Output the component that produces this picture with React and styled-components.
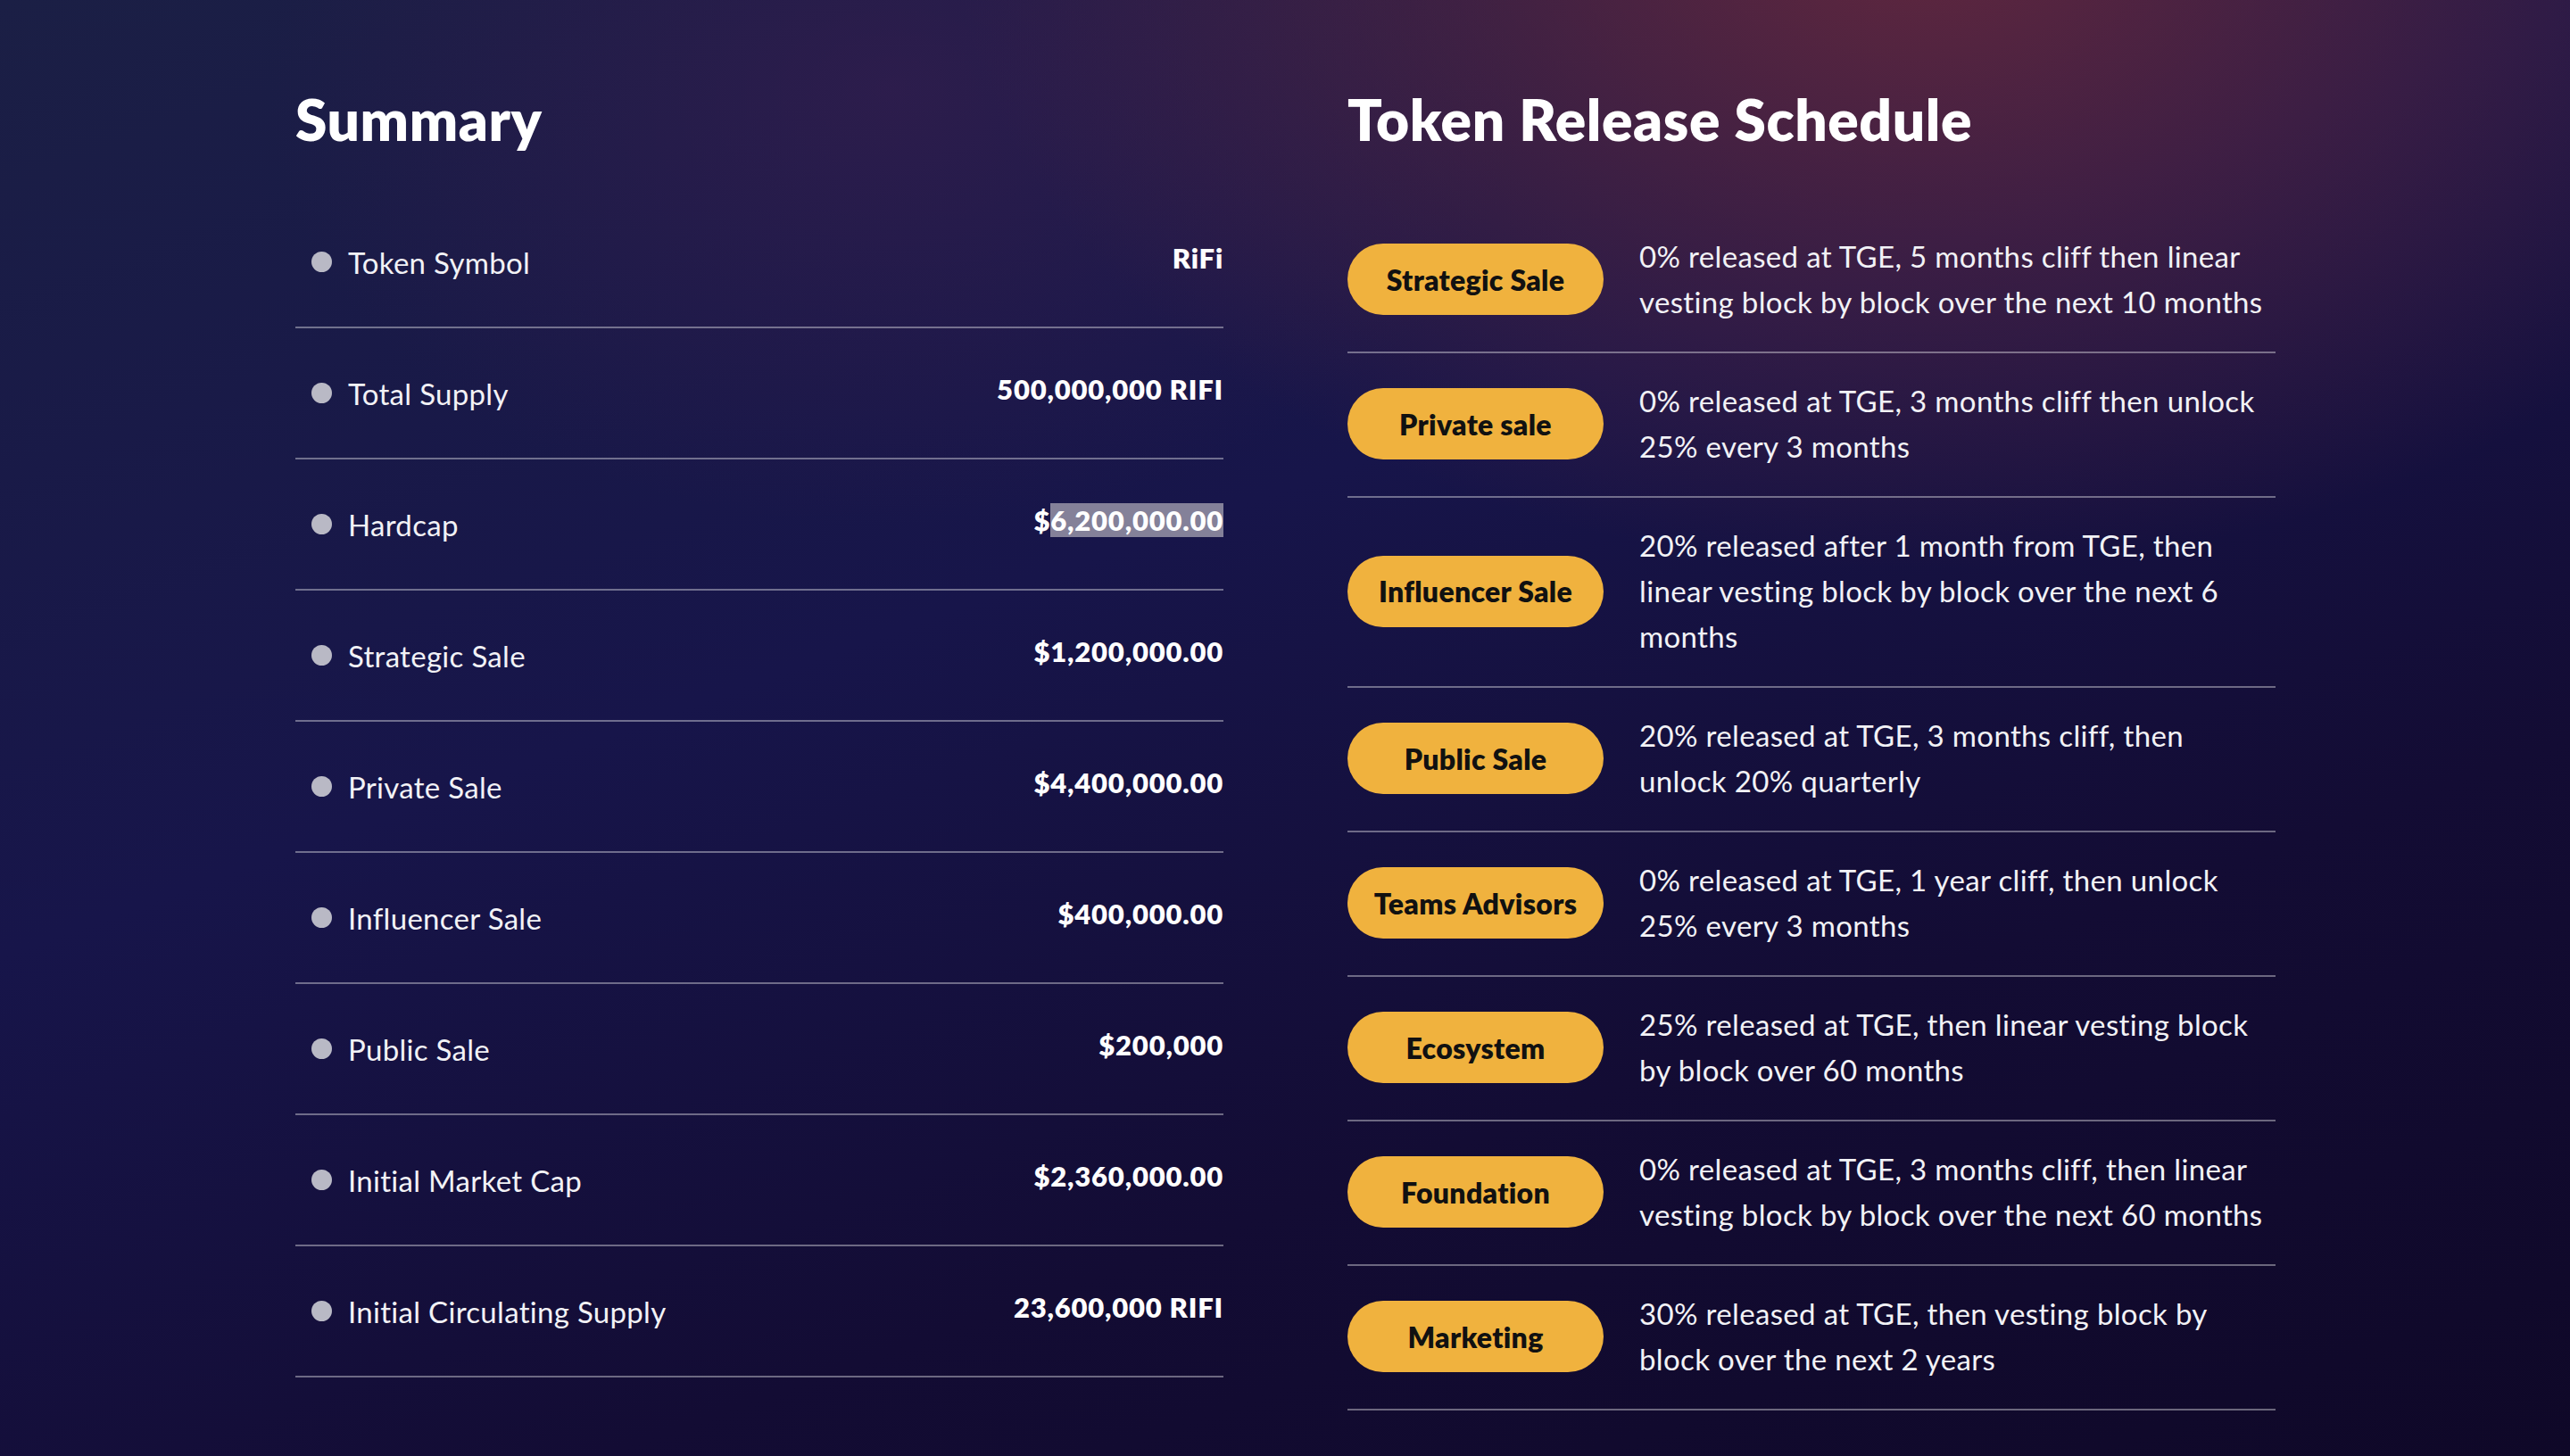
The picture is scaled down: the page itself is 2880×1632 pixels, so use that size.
import React from "react";
import styled, { createGlobalStyle } from "styled-components";

const Global = createGlobalStyle`
  html, body { margin: 0; padding: 0; }
  body {
    font-family: Lato, "Open Sans", sans-serif;
    color: #fff;
    background: #120f33;
  }
`;

const Page = styled.div`
  width: 2880px;
  height: 1632px;
  box-sizing: border-box;
  padding: 92px 330px 0 331px;
  display: grid;
  grid-template-columns: 1040px 1040px;
  column-gap: 139px;
  background:
    radial-gradient(ellipse 1500px 1000px at 2150px -80px, rgba(110,42,60,0.85), rgba(110,42,60,0) 72%),
    radial-gradient(ellipse 1000px 700px at 1000px 100px, rgba(60,30,80,0.55), rgba(60,30,80,0) 70%),
    linear-gradient(160deg, #1b1f45 0%, #17154a 40%, #130c34 70%, #0f0828 100%);
  overflow: hidden;
`;

const Column = styled.section`
  display: flex;
  flex-direction: column;
`;

const Title = styled.h2`
  margin: 0 0 ${(p) => p.$gap}px;
  font-size: 64px;
  font-weight: 800;
  letter-spacing: 0.6px;
  line-height: 84px;
`;

const SumRow = styled.div`
  height: 147px;
  box-sizing: border-box;
  border-bottom: 2px solid rgba(255,255,255,0.38);
  display: flex;
  justify-content: space-between;
  align-items: center;
  padding: 0 0 0 18px;
`;

const Label = styled.div`
  display: flex;
  align-items: center;
  gap: 18px;
  font-size: 33px;
  letter-spacing: 0.3px;
  color: #f2f2f6;
`;

const Dot = styled.span`
  width: 23px;
  height: 23px;
  border-radius: 50%;
  background: #b9b9c5;
`;

const Value = styled.div`
  font-size: 31px;
  font-weight: 800;
  letter-spacing: 0.8px;
  margin-top: -10px;
`;

const Hl = styled.span`
  background: rgba(170,165,180,0.75);
`;

const RelRow = styled.div`
  display: flex;
  align-items: center;
  gap: 40px;
  padding: 28px 0 30px;
  border-bottom: 2px solid rgba(255,255,255,0.38);
`;

const Pill = styled.div`
  flex: 0 0 287px;
  height: 80px;
  border-radius: 40px;
  background: #f0b23e;
  color: #111;
  font-size: 32px;
  font-weight: 800;
  letter-spacing: 0.3px;
  display: flex;
  align-items: center;
  justify-content: center;
`;

const Desc = styled.div`
  font-size: 33px;
  line-height: 51px;
  letter-spacing: 0.35px;
  color: #f2f2f6;
`;

const summary = [
  ["Token Symbol", "RiFi"],
  ["Total Supply", "500,000,000 RIFI"],
  ["Hardcap", null],
  ["Strategic Sale", "$1,200,000.00"],
  ["Private Sale", "$4,400,000.00"],
  ["Influencer Sale", "$400,000.00"],
  ["Public Sale", "$200,000"],
  ["Initial Market Cap", "$2,360,000.00"],
  ["Initial Circulating Supply", "23,600,000 RIFI"],
];

const release = [
  ["Strategic Sale", "0% released at TGE, 5 months cliff then linear vesting block by block over the next 10 months"],
  ["Private sale", "0% released at TGE, 3 months cliff then unlock 25% every 3 months"],
  ["Influencer Sale", "20% released after 1 month from TGE, then linear vesting block by block over the next 6 months"],
  ["Public Sale", "20% released at TGE, 3 months cliff, then unlock 20% quarterly"],
  ["Teams Advisors", "0% released at TGE, 1 year cliff, then unlock 25% every 3 months"],
  ["Ecosystem", "25% released at TGE, then linear vesting block by block over 60 months"],
  ["Foundation", "0% released at TGE, 3 months cliff, then linear vesting block by block over the next 60 months"],
  ["Marketing", "30% released at TGE, then vesting block by block over the next 2 years"],
];

export default function App() {
  return (
    <>
      <Global />
      <Page>
        <Column>
          <Title $gap={45}>Summary</Title>
          {summary.map(([l, v]) => (
            <SumRow key={l}>
              <Label><Dot />{l}</Label>
              <Value>{v === null ? <>$<Hl>6,200,000.00</Hl></> : v}</Value>
            </SumRow>
          ))}
        </Column>
        <Column>
          <Title $gap={58}>Token Release Schedule</Title>
          {release.map(([p, d]) => (
            <RelRow key={p}>
              <Pill>{p}</Pill>
              <Desc>{d}</Desc>
            </RelRow>
          ))}
        </Column>
      </Page>
    </>
  );
}
